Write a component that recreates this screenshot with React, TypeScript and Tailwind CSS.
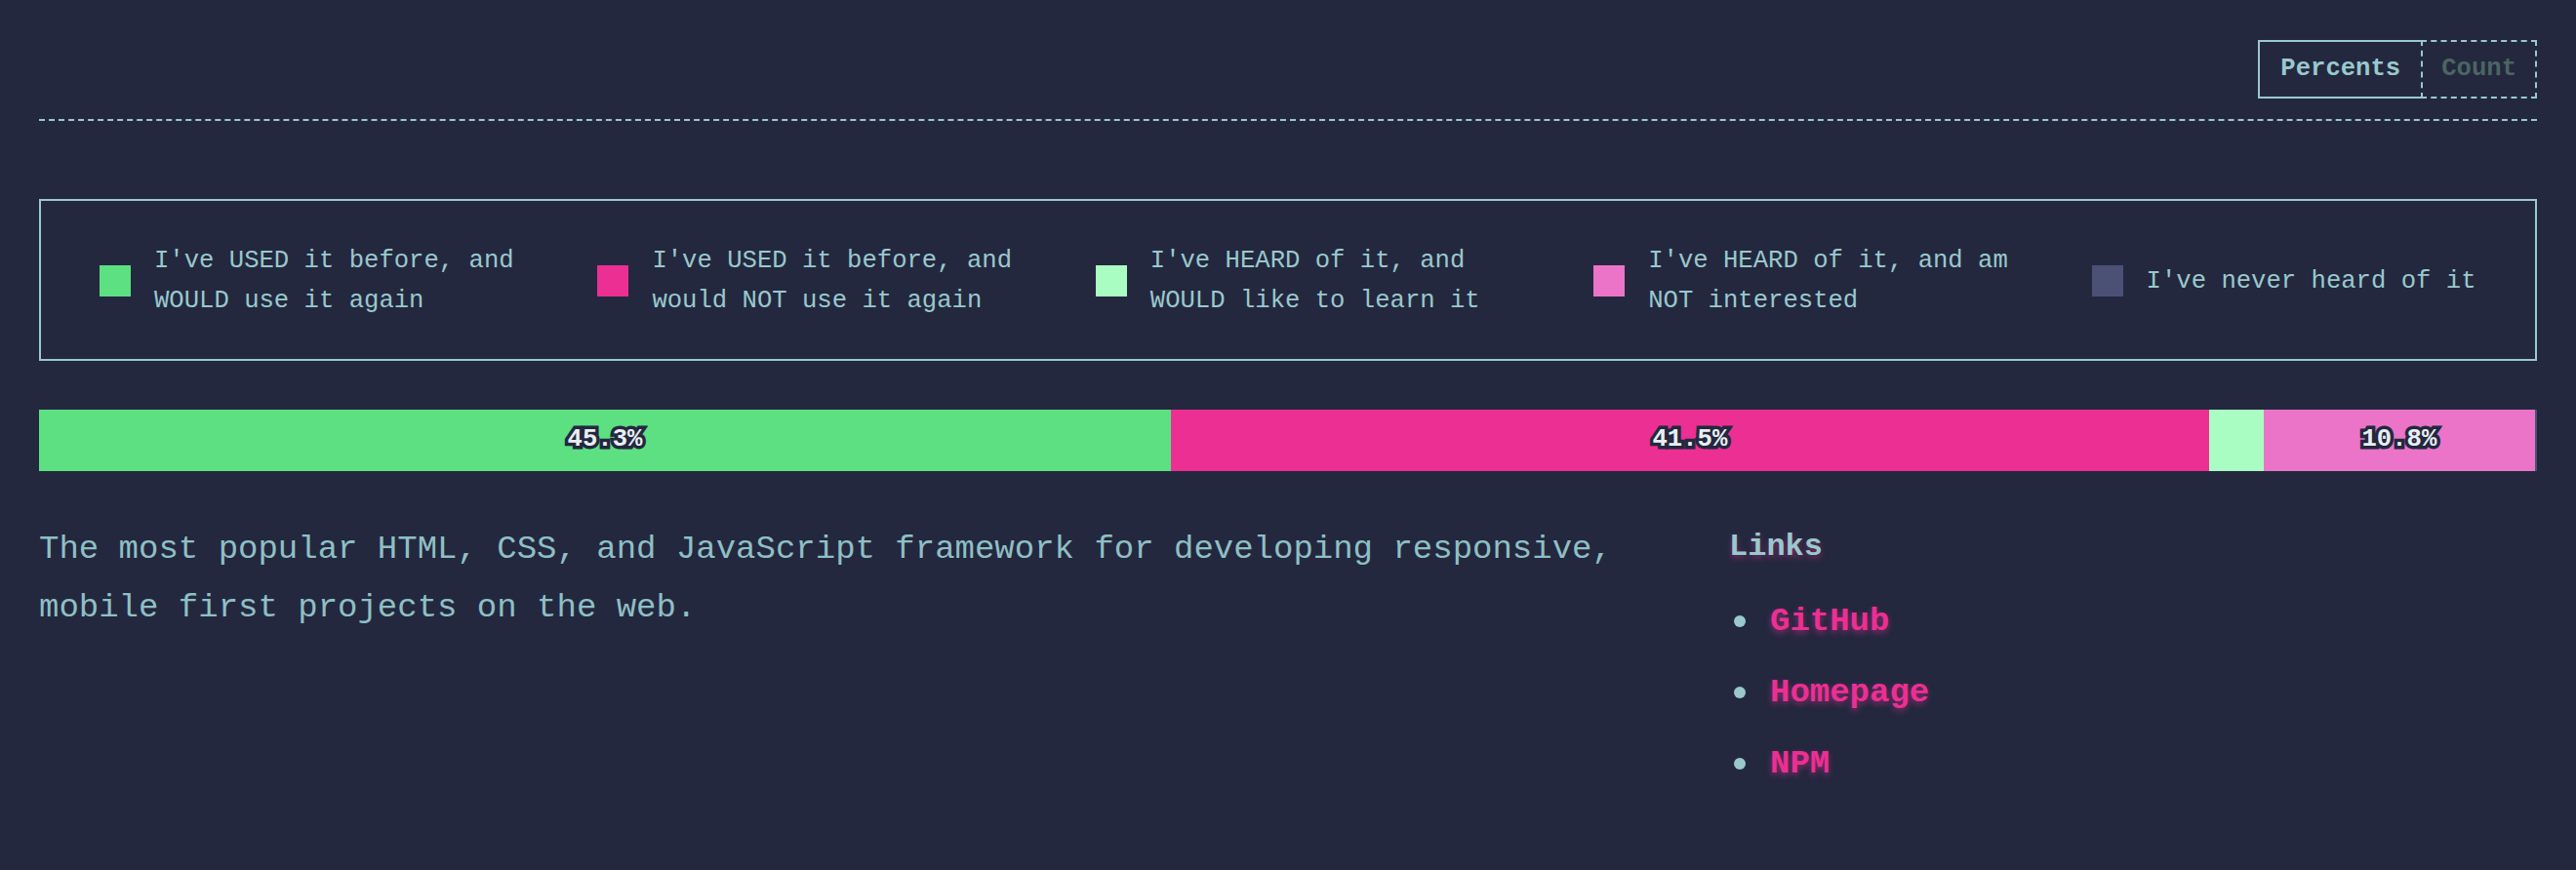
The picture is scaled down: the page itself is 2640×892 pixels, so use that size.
type Segment = {
  label: string;
  width: number;
  color: string;
  showLabel: boolean;
};

const legend = [
  { color: "bg-[#5ce081]", lines: ["I've USED it before, and", "WOULD use it again"] },
  { color: "bg-[#ec2f93]", lines: ["I've USED it before, and", "would NOT use it again"] },
  { color: "bg-[#aafdc2]", lines: ["I've HEARD of it, and", "WOULD like to learn it"] },
  { color: "bg-[#eb74c9]", lines: ["I've HEARD of it, and am", "NOT interested"] },
  { color: "bg-[#4b5175]", lines: ["I've never heard of it"] },
];

const segments: Segment[] = [
  { label: "45.3%", width: 45.31, color: "bg-[#5ce081]", showLabel: true },
  { label: "41.5%", width: 41.56, color: "bg-[#ec2f93]", showLabel: true },
  { label: "2.2%", width: 2.19, color: "bg-[#aafdc2]", showLabel: false },
  { label: "10.8%", width: 10.86, color: "bg-[#eb74c9]", showLabel: true },
  { label: "0.1%", width: 0.08, color: "bg-[#4b5175]", showLabel: false },
];

const links = ["GitHub", "Homepage", "NPM"];

export default function App() {
  return (
    <div className="min-h-screen w-full bg-[#23283f] px-[40px] pt-[41px] pb-10 font-['Liberation_Mono','DejaVu_Sans_Mono',monospace] text-[#9ac8cc]">
      {/* toggle */}
      <div className="flex justify-end border-b-2 border-dashed border-[#9ac8cc] pb-[21px]">
        <div className="flex h-[60px]">
          <button className="h-full border-2 border-r-0 border-[#9ac8cc] px-[21px] text-[25.6px] font-bold text-[#9ac8cc]">
            Percents
          </button>
          <button className="h-full border-2 border-dashed border-[#9ac8cc] px-[19px] text-[25.6px] font-bold text-[#4b6562]">
            Count
          </button>
        </div>
      </div>

      {/* legend */}
      <div className="mt-[80px] border-2 border-[#9ac8cc] pt-[41px] pb-[39px] pl-[60px] pr-[14px]">
        <div className="grid grid-cols-5 gap-x-[70px]">
          {legend.map((item, i) => (
            <div key={i} className="flex items-center gap-[24px]">
              <span className={`h-[32px] w-[32px] shrink-0 ${item.color}`} />
              <div className="text-[25.6px] leading-[41px] whitespace-nowrap">
                {item.lines.map((l) => (
                  <div key={l}>{l}</div>
                ))}
              </div>
            </div>
          ))}
        </div>
      </div>

      {/* bar */}
      <div className="mt-[50px] flex h-[63px] w-full">
        {segments.map((s) => (
          <div
            key={s.label}
            className={`flex h-full items-center justify-center ${s.color}`}
            style={{ width: `${s.width}%` }}
          >
            {s.showLabel && (
              <span className="text-[25.6px] font-bold text-[#e9eef2] [-webkit-text-stroke:7px_#23283f] [paint-order:stroke_fill]">
                {s.label}
              </span>
            )}
          </div>
        ))}
      </div>

      {/* description + links */}
      <div className="mt-[50px] flex">
        <p className="w-[1680px] text-[34px] leading-[60px] text-[#8fbfc4]">
          The most popular HTML, CSS, and JavaScript framework for developing responsive, mobile first projects on the web.
        </p>
        <div className="ml-auto w-[828px]">
          <h3 className="mt-[4px] text-[32px] leading-[48px] font-bold text-[#9ac8cc] [text-shadow:0_3px_6px_rgba(236,47,147,0.45)]">
            Links
          </h3>
          <ul className="mt-[28px] flex flex-col gap-[25px]">
            {links.map((l) => (
              <li key={l} className="flex h-[48px] items-center gap-[25px] pl-[5px]">
                <span className="h-[12px] w-[12px] rounded-full bg-[#9ac8cc]" />
                <a className="text-[34px] leading-[48px] font-bold text-[#ec2f93] [text-shadow:0_3px_6px_rgba(236,47,147,0.5)]">
                  {l}
                </a>
              </li>
            ))}
          </ul>
        </div>
      </div>
    </div>
  );
}
